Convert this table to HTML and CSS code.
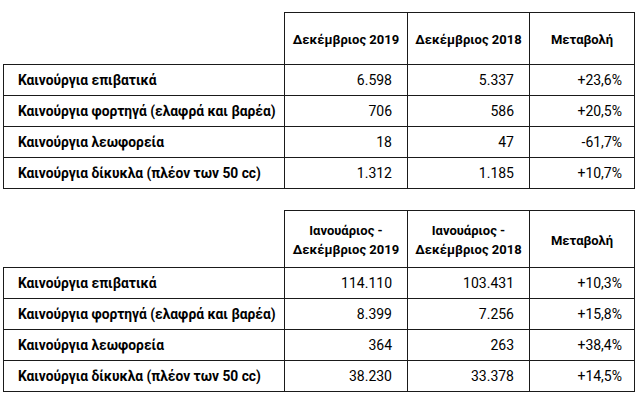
FILE: index.html
```html
<!DOCTYPE html>
<html lang="el">
<head>
<meta charset="utf-8">
<title>Ταξινομήσεις οχημάτων</title>
<link rel="stylesheet" href="styles.css">
</head>
<body>
<div class="page">
  <table class="stats">
    <colgroup><col class="c-label"><col class="c-num"><col class="c-num2"><col class="c-chg"></colgroup>
    <thead>
      <tr class="head">
        <th class="blank"></th>
        <th>Δεκέμβριος 2019</th>
        <th>Δεκέμβριος 2018</th>
        <th>Μεταβολή</th>
      </tr>
    </thead>
    <tbody>
      <tr><th class="label">Καινούργια επιβατικά</th><td>6.598</td><td>5.337</td><td class="chg">+23,6%</td></tr>
      <tr><th class="label">Καινούργια φορτηγά (ελαφρά και βαρέα)</th><td>706</td><td>586</td><td class="chg">+20,5%</td></tr>
      <tr><th class="label">Καινούργια λεωφορεία</th><td>18</td><td>47</td><td class="chg">-61,7%</td></tr>
      <tr><th class="label">Καινούργια δίκυκλα (πλέον των 50 cc)</th><td>1.312</td><td>1.185</td><td class="chg">+10,7%</td></tr>
    </tbody>
  </table>

  <table class="stats second">
    <colgroup><col class="c-label"><col class="c-num"><col class="c-num2"><col class="c-chg"></colgroup>
    <thead>
      <tr class="head tall">
        <th class="blank"></th>
        <th>Ιανουάριος -<br>Δεκέμβριος 2019</th>
        <th>Ιανουάριος -<br>Δεκέμβριος 2018</th>
        <th>Μεταβολή</th>
      </tr>
    </thead>
    <tbody>
      <tr><th class="label">Καινούργια επιβατικά</th><td>114.110</td><td>103.431</td><td class="chg">+10,3%</td></tr>
      <tr><th class="label">Καινούργια φορτηγά (ελαφρά και βαρέα)</th><td>8.399</td><td>7.256</td><td class="chg">+15,8%</td></tr>
      <tr><th class="label">Καινούργια λεωφορεία</th><td>364</td><td>263</td><td class="chg">+38,4%</td></tr>
      <tr><th class="label">Καινούργια δίκυκλα (πλέον των 50 cc)</th><td>38.230</td><td>33.378</td><td class="chg">+14,5%</td></tr>
    </tbody>
  </table>
</div>
</body>
</html>
```

FILE: styles.css
```css
html, body {
  margin: 0;
  padding: 0;
  background: #ffffff;
}

.page {
  padding: 12px 0 0 3px;
  font-family: Roboto, "Noto Sans", "DejaVu Sans", sans-serif;
  font-size: 14px;
  color: #000000;
}

.stats {
  border-collapse: collapse;
  table-layout: fixed;
  width: 632px;
}

.stats.second {
  margin-top: 21px;
}

.c-label { width: 281px; }
.c-num { width: 123px; }
.c-num2 { width: 122px; }
.c-chg { width: 105px; }

.stats th,
.stats td {
  border: 1px solid #1a1a1a;
  padding: 0;
  line-height: 19px;
}

.stats .blank {
  border-top: none;
  border-left: none;
}

.head th {
  height: 49px;
  font-size: 13px;
  font-weight: 700;
  text-align: center;
  vertical-align: middle;
  padding-top: 2px;
}

.head.tall th {
  height: 54px;
}

.stats tbody tr {
  height: 31px;
}

.stats .label {
  font-size: 13.8px;
  font-weight: 700;
  text-align: left;
  padding-left: 14px;
  white-space: nowrap;
}

.stats td {
  text-align: right;
  padding-right: 15px;
}

.stats td.chg {
  padding-right: 12px;
}
```
